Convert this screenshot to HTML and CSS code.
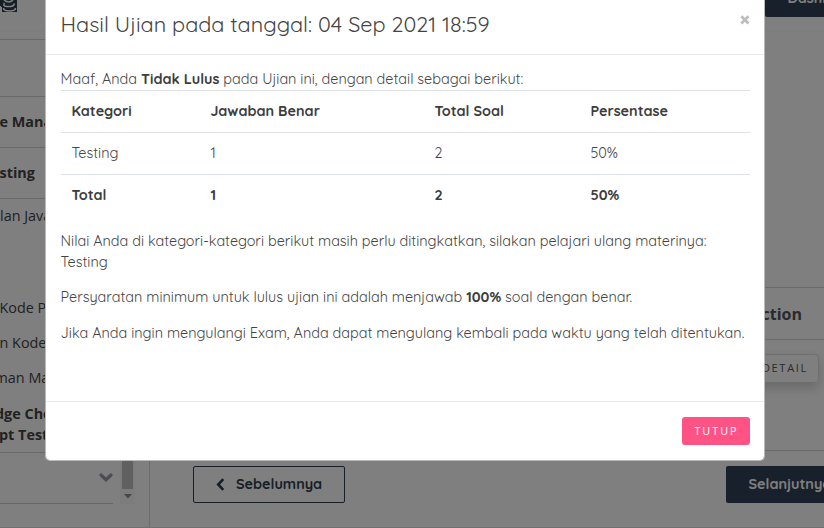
FILE: index.html
```html
<!DOCTYPE html>
<html lang="id">
<head>
<meta charset="utf-8">
<title>Hasil Ujian</title>
<link rel="stylesheet" href="styles.css">
</head>
<body>
<div class="page">
  <header class="topbar">
    <svg class="logo" width="18" height="12" viewBox="0 0 18 12"><path d="M0 0h1v6H0zM1 0h16v12H2V7H1z" fill="#2d3e50"/><path d="M4 0q5 4 9 0M4.500 3q-2 3 2 3.500h4q3 0 4-3M3.500 8q0 3 6 3t6-3" fill="none" stroke="#fff" stroke-width="1.600"/></svg>
    <span class="dash">Dashboard</span>
  </header>
  <div class="layout">
    <aside class="sidebar">
      <div class="block first"></div>
      <div class="block strong">e Manager</div>
      <div class="block strong">sting</div>
      <div class="lessons">
        <p class="java">lan Java</p>
        <p class="item">Kode Program</p>
        <p class="item">n Kode</p>
        <p class="item cut">man Materi</p>
        <p class="quiz cut">dge Check<br><span class="test">pt Testing</span></p>
      </div>
      <div class="more">
        <div class="fold"><svg width="14" height="9" viewBox="0 0 14 9"><path d="M2 2l5 4.700L12 2" fill="none" stroke="#999ba4" stroke-width="3.200" stroke-linecap="round"/></svg></div>
        <div class="scroll"><div class="thumb"></div><svg width="8" height="5" viewBox="0 0 8 5"><path d="M0 0h8L4 4.500z" fill="#8e8e8e"/></svg></div>
      </div>
    </aside>
    <main class="main">
      <div class="th"><span>Action</span></div>
      <div class="td"><span class="detail">DETAIL</span></div>
      <nav class="pager">
        <span class="prev"><svg width="9" height="13" viewBox="0 0 9 13"><path d="M7.300 1.200L2.200 6.500l5.100 5.300" fill="none" stroke="#2d3e50" stroke-width="2.600"/></svg><b>Sebelumnya</b></span>
        <span class="next">Selanjutnya</span>
      </nav>
    </main>
  </div>
</div>
<div class="backdrop"></div>
<section class="modal">
  <div class="head">
    <h1>Hasil Ujian pada tanggal: 04 Sep 2021 18:59</h1>
    <svg class="close" width="10" height="10" viewBox="0 0 10 10"><path d="M1.300 1.300l7.200 7.200M8.500 1.300L1.300 8.500" stroke="#bdbdbd" stroke-width="2.800"/></svg>
  </div>
  <div class="body">
    <p class="intro">Maaf, Anda <b>Tidak Lulus</b> pada Ujian ini, dengan detail sebagai berikut:</p>
    <table>
      <colgroup><col class="c1"><col class="c2"><col class="c3"><col></colgroup>
      <tr><th>Kategori</th><th>Jawaban Benar</th><th>Total Soal</th><th>Persentase</th></tr>
      <tr><td>Testing</td><td>1</td><td>2</td><td>50%</td></tr>
      <tr><th>Total</th><th>1</th><th>2</th><th>50%</th></tr>
    </table>
    <p>Nilai Anda di kategori-kategori berikut masih perlu ditingkatkan, silakan pelajari ulang materinya:<br>Testing</p>
    <p>Persyaratan minimum untuk lulus ujian ini adalah menjawab <b>100%</b> soal dengan benar.</p>
    <p class="retry">Jika Anda ingin mengulangi Exam, Anda dapat mengulang kembali pada waktu yang telah ditentukan.</p>
  </div>
  <div class="foot"><button>TUTUP</button></div>
</section>
</body>
</html>
```
FILE: styles.css
```css
* { box-sizing: border-box; }
body { margin: 0; height: 528px; overflow: hidden; position: relative; background: #fff; font-family: Quicksand, Lato, sans-serif; font-size: 14.4px; color: #444; }
p { margin: 0; }
.page { height: 528px; overflow: hidden; }
.topbar { height: 30px; display: flex; justify-content: space-between; align-items: flex-start; box-shadow: 0 1px 3px rgba(0,0,0,.04); }
.logo { display: block; }
.dash { width: 59px; height: 17px; overflow: hidden; background: #304156; color: #fff; font-weight: 700; border-radius: 0 0 0 2px; padding: 0 0 11px 22.5px; line-height: 16px; display: flex; align-items: flex-end; }
.layout { display: flex; height: 498px; border-bottom: 1px solid #e2e2e2; }
.sidebar { width: 150px; border-right: 1px solid #d8d8d8; font-family: "Open Sans", sans-serif; padding-top: 9px; white-space: nowrap; color: #444; flex: none; overflow: hidden; }
.block { height: 51px; border-bottom: 1px solid #d2d2d2; line-height: 50px; text-indent: -.5px; }
.first { height: 58px; border-top: 1px solid #d2d2d2; }
.strong { font-weight: 700; }
.lessons { height: 254px; padding-top: 6px; line-height: 21px; border-bottom: 1px solid #d2d2d2; }
.java { height: 85px; }
.item { height: 35px; line-height: 35px; text-indent: -.5px; }
.cut { margin-left: -5px; }
.quiz { font-weight: 700; padding-top: 8px; }
.test { padding-left: 4px; }
.more { display: flex; height: 51px; }
.fold { width: 113px; border-bottom: 1px solid #cdcdcd; padding: 20px 0 0 99px; }
.fold svg { display: block; }
.scroll { width: 15px; margin-left: 7px; background: #f9f9f9; display: flex; flex-direction: column; align-items: center; }
.thumb { width: 11px; height: 36px; background: #c1c1c1; margin-bottom: 5px; }
.main { flex: 1; min-width: 0; padding-top: 257px; }
.th { height: 53px; border: 1px solid #d5d5d5; border-width: 1px 0; font: 700 16px/52px "Open Sans", sans-serif; display: flex; justify-content: flex-end; padding-right: 22px; color: #53545e; }
.td { height: 111px; border-bottom: 1px solid #d5d5d5; display: flex; justify-content: flex-end; align-items: flex-start; padding: 14px 5px 0 0; }
.detail { width: 80px; height: 29px; border: 1px solid #ddd; border-radius: 4px; box-shadow: 0 5px 12px rgba(0,0,0,.18); font: 11px/26px "Open Sans", sans-serif; letter-spacing: 1.7px; text-align: right; padding-right: 10px; color: #555; }
.pager { display: flex; justify-content: space-between; padding: 15px 0 0 43px; font-weight: 700; }
.prev { width: 152px; height: 37px; border: 1px solid #2d3e50; border-radius: 2px; color: #2d3e50; display: flex; align-items: center; padding: 0 0 1px 22px; gap: 11px; }
.next { width: 98px; height: 37px; background: #304156; color: #fff; border-radius: 2px 0 0 2px; line-height: 36px; padding-left: 22.5px; overflow: hidden; }
.backdrop { position: absolute; inset: 0; background: rgba(0,0,0,.5); }
.modal { position: absolute; left: 45px; top: 0; width: 720px; height: 461px; background: #fff; border: 1px solid #b9b9b9; border-top: 0; border-radius: 0 0 5px 5px; background-clip: padding-box; }
.head { height: 55px; border-bottom: 1px solid #e9ecef; display: flex; justify-content: space-between; padding: 0 14px 0 14.5px; }
h1 { margin: 0; font-size: 21.6px; line-height: 47px; font-weight: 400; white-space: nowrap; color: #444; }
.close { margin-top: 15px; }
.body { height: 346px; padding: 14px 14px 0 14.6px; line-height: 21px; white-space: nowrap; }
table { width: 689px; border-collapse: separate; border-spacing: 0; table-layout: fixed; margin-bottom: 15px; }
.body p { margin-bottom: 14px; }
.body .intro { margin: 0; }
.body .retry { padding-top: 1px; }
.c1 { width: 139px; }
.c2 { width: 224px; }
.c3 { width: 156px; }
th, td { height: 42px; padding: 0 0 1px 10.8px; text-align: left; border-top: 1px solid #dee2e6; font-weight: 400; }
th { font-weight: 700; color: #3d3d3d; }
b { color: #3d3d3d; }
.prev b { color: inherit; }
.foot { height: 59px; border-top: 1px solid #e9ecef; display: flex; justify-content: flex-end; padding: 15px 14px 0; }
button { width: 68px; height: 28px; border: 0; border-radius: 3px; background: #ff5385; color: #fff; font: 10.8px "Open Sans", sans-serif; letter-spacing: 2px; padding: 0 0 1px 1px; }
```
